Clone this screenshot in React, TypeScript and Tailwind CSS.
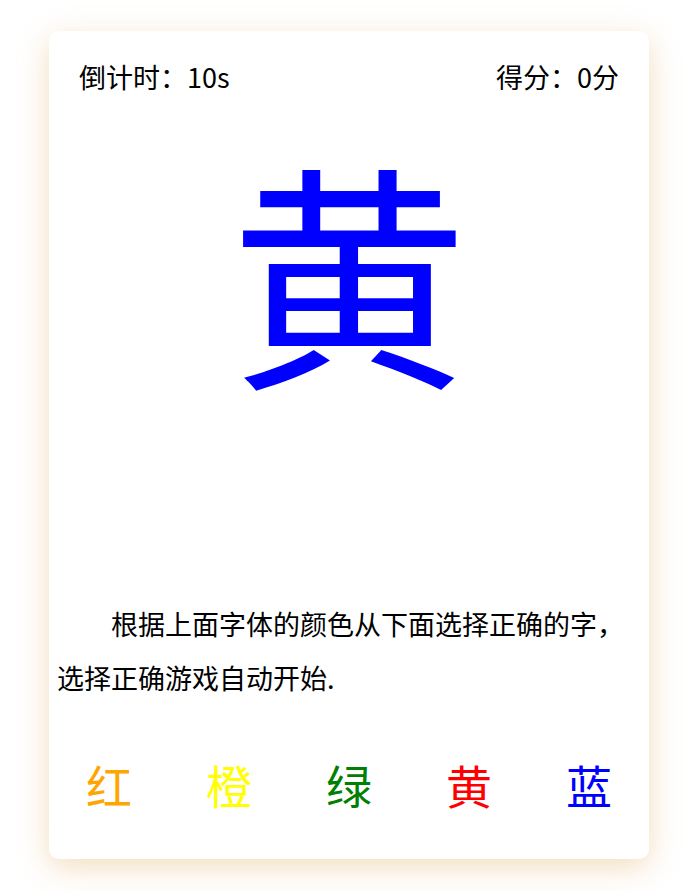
import React from "react";

const options = [
  { t: "红", c: "text-[#ffa500]" },
  { t: "橙", c: "text-[#ffff00]" },
  { t: "绿", c: "text-[#008000]" },
  { t: "黄", c: "text-[#ff0000]" },
  { t: "蓝", c: "text-[#0000ff]" },
];

export default function App() {
  return (
    <div
      className="min-h-[891px] w-full bg-white pt-[31px]"
      style={{ fontFamily: '"Noto Sans CJK SC", "Noto Sans", sans-serif' }}
    >
      <div className="ml-[49px] flex h-[828px] w-[600px] flex-col rounded-[10px] bg-white shadow-[0_8px_30px_rgba(230,180,110,0.45)]">
        <div className="flex justify-between px-[30px] pt-[30px] text-[27px] leading-[32px] text-black">
          <span>倒计时：10s</span>
          <span>得分：0分</span>
        </div>
        <div className="mt-[44px] flex h-[260px] items-center justify-center text-[238px] leading-[240px] text-[#0000ff]">
          黄
        </div>
        <div className="mt-[200px] px-[8px] text-[27px] leading-[54px] indent-[54px] text-black">
          根据上面字体的颜色从下面选择正确的字，选择正确游戏自动开始.
        </div>
        <div className="mt-[49px] grid grid-cols-5">
          {options.map((o) => (
            <button
              key={o.t}
              className={`flex h-[60px] items-center justify-center text-[46px] leading-[60px] ${o.c}`}
            >
              {o.t}
            </button>
          ))}
        </div>
      </div>
    </div>
  );
}
